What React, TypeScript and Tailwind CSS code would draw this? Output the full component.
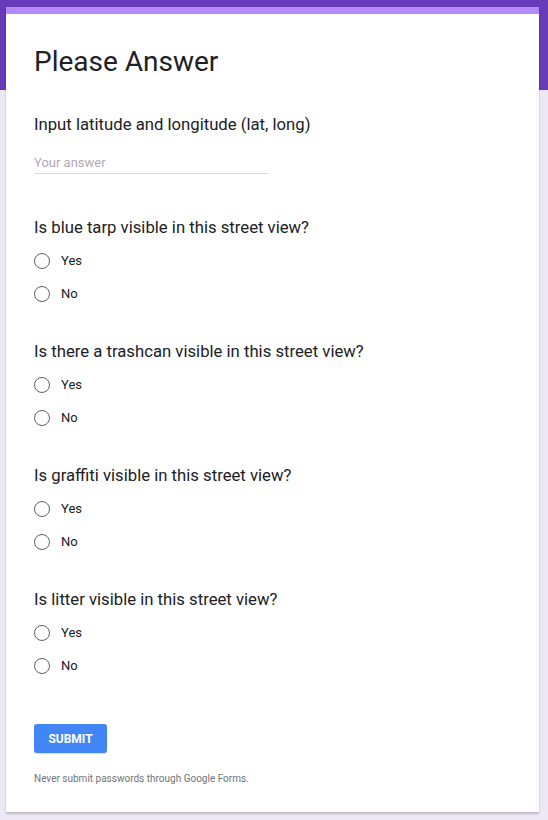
const questions = [
  "Is blue tarp visible in this street view?",
  "Is there a trashcan visible in this street view?",
  "Is graffiti visible in this street view?",
  "Is litter visible in this street view?",
];

function Radio({ label }: { label: string }) {
  return (
    <label className="flex items-center h-[33px] cursor-pointer">
      <span className="w-[16px] h-[16px] rounded-full border-[1.5px] border-[#5f6368] box-border" />
      <span className="ml-[11px] text-[13px] text-[#202124]">{label}</span>
    </label>
  );
}

export default function App() {
  return (
    <div
      className="min-h-[820px] pt-[7px] pb-[8px] bg-[linear-gradient(#673ab7_90px,#ede7f6_90px)]"
      style={{ fontFamily: "Roboto, 'Liberation Sans', sans-serif" }}
    >
      <div className="ml-[6px] w-[533px] h-[805px] bg-white border-t-[7px] border-[#b28afb] shadow-[0_2px_2px_rgba(0,0,0,0.2)] px-[28px]">
        <h1 className="pt-[30px] text-[28px] leading-[36px] text-[#202124]">Please Answer</h1>

        {/* Text question */}
        <div className="mt-[33px]">
          <div className="text-[16.7px] leading-[24px] text-[#202124]">
            Input latitude and longitude (lat, long)
          </div>
          <div className="mt-[18px] w-[235px] border-b border-[#dadce0] pb-[2px] text-[13px] leading-[16px] text-[#b0aab8]">
            Your answer
          </div>
        </div>

        {/* Radio questions */}
        {questions.map((q, i) => (
          <div key={i} className={i === 0 ? "mt-[42px]" : "mt-[30px]"}>
            <div className="text-[16.7px] leading-[24px] text-[#202124]">{q}</div>
            <div className="mt-[4px]">
              <Radio label="Yes" />
              <Radio label="No" />
            </div>
          </div>
        ))}

        <button className="mt-[42px] w-[73px] h-[29px] rounded-[3px] bg-[#4285f4] text-white text-[12px] font-bold shadow-[0_1px_1px_rgba(0,0,0,0.15)]">
          SUBMIT
        </button>
        <div className="mt-[18px] text-[10px] text-[#70757a]">
          Never submit passwords through Google Forms.
        </div>
      </div>
    </div>
  );
}
